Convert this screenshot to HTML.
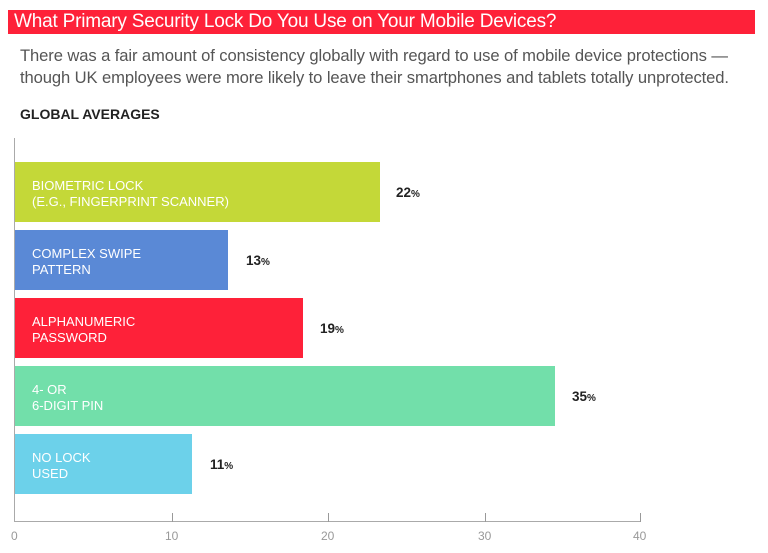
<!DOCTYPE html>
<html><head><style>
body{margin:0;width:768px;height:553px;background:#fff;font-family:"Liberation Sans",sans-serif;position:relative;overflow:hidden}
.a{position:absolute}
.hdr{left:8px;top:10px;width:747px;height:24px;background:#fe2139;color:#fff;font-size:19px;line-height:24px;padding-left:6px;box-sizing:border-box;letter-spacing:-0.2px}
.p{left:20px;font-size:16.6px;color:#555;letter-spacing:-0.1px;white-space:nowrap}
.bar{left:15px;height:60px}
.lbl{position:absolute;left:17px;top:16px;color:#fff;font-size:13px;line-height:16px}
.v{font-size:13.5px;font-weight:bold;color:#222}
.v small{font-size:10px}
.tick{top:513px;width:1px;height:9px;background:#999}
.t{top:529px;font-size:12px;color:#999}
</style></head><body>
<div class="a hdr">What Primary Security Lock Do You Use on Your Mobile Devices?</div>
<div class="a p" style="top:46px">There was a fair amount of consistency globally with regard to use of mobile device protections —</div>
<div class="a p" style="top:68px">though UK employees were more likely to leave their smartphones and tablets totally unprotected.</div>
<div class="a" style="left:20px;top:106px;font-size:14px;font-weight:bold;color:#222">GLOBAL AVERAGES</div>
<div class="a" style="left:14px;top:138px;width:1px;height:384px;background:#aaa"></div>
<div class="a" style="left:14px;top:521px;width:627px;height:1px;background:#aaa"></div>
<div class="a bar" style="top:162px;width:365px;background:#c4d838"><div class="lbl">BIOMETRIC LOCK<br>(E.G., FINGERPRINT SCANNER)</div></div>
<div class="a v" style="left:396px;top:185px">22<small>%</small></div>
<div class="a bar" style="top:230px;width:213px;background:#5a89d6"><div class="lbl">COMPLEX SWIPE<br>PATTERN</div></div>
<div class="a v" style="left:246px;top:253px">13<small>%</small></div>
<div class="a bar" style="top:298px;width:288px;background:#fe2139"><div class="lbl">ALPHANUMERIC<br>PASSWORD</div></div>
<div class="a v" style="left:320px;top:321px">19<small>%</small></div>
<div class="a bar" style="top:366px;width:540px;background:#72dfaa"><div class="lbl">4- OR<br>6-DIGIT PIN</div></div>
<div class="a v" style="left:572px;top:389px">35<small>%</small></div>
<div class="a bar" style="top:434px;width:177px;background:#6cd1ea"><div class="lbl">NO LOCK<br>USED</div></div>
<div class="a v" style="left:210px;top:457px">11<small>%</small></div>
<div class="a tick" style="left:172px"></div>
<div class="a tick" style="left:328px"></div>
<div class="a tick" style="left:485px"></div>
<div class="a tick" style="left:640px"></div>
<div class="a t" style="left:11px">0</div>
<div class="a t" style="left:165px">10</div>
<div class="a t" style="left:321px">20</div>
<div class="a t" style="left:478px">30</div>
<div class="a t" style="left:633px">40</div>
</body></html>
